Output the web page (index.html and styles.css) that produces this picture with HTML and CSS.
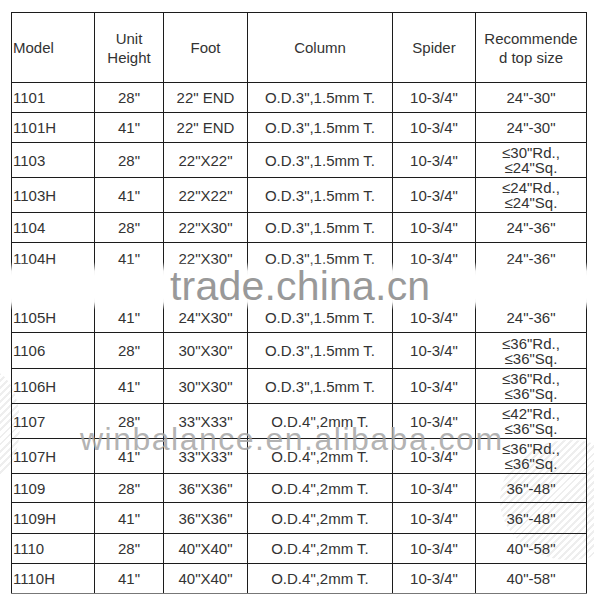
FILE: index.html
```html
<!DOCTYPE html>
<html>
<head>
<meta charset="utf-8">
<link rel="stylesheet" href="styles.css">
</head>
<body>
<div class="page">
  <div class="swoosh swoosh-left"></div>
  <div class="swoosh swoosh-right"></div>
  <table class="spec">
    <colgroup>
      <col class="c-model"><col class="c-height"><col class="c-foot"><col class="c-column"><col class="c-spider"><col class="c-top">
    </colgroup>
    <tr class="head">
      <td class="model">Model</td><td>Unit<br>Height</td><td>Foot</td><td>Column</td><td>Spider</td><td>Recommende<br>d top size</td>
    </tr>
    <tr class="r30"><td class="model">1101</td><td>28"</td><td>22" END</td><td>O.D.3",1.5mm T.</td><td>10-3/4"</td><td>24"-30"</td></tr>
    <tr class="r30"><td class="model">1101H</td><td>41"</td><td>22" END</td><td>O.D.3",1.5mm T.</td><td>10-3/4"</td><td>24"-30"</td></tr>
    <tr class="r35"><td class="model">1103</td><td>28"</td><td>22"X22"</td><td>O.D.3",1.5mm T.</td><td>10-3/4"</td><td class="two">≤30"Rd.,<br>≤24"Sq.</td></tr>
    <tr class="r35"><td class="model">1103H</td><td>41"</td><td>22"X22"</td><td>O.D.3",1.5mm T.</td><td>10-3/4"</td><td class="two">≤24"Rd.,<br>≤24"Sq.</td></tr>
    <tr class="r30"><td class="model">1104</td><td>28"</td><td>22"X30"</td><td>O.D.3",1.5mm T.</td><td>10-3/4"</td><td>24"-36"</td></tr>
    <tr class="split-top"><td class="model">1104H</td><td>41"</td><td>22"X30"</td><td>O.D.3",1.5mm T.</td><td>10-3/4"</td><td>24"-36"</td></tr>
    <tr class="split-bottom"><td class="model">1105H</td><td>41"</td><td>24"X30"</td><td>O.D.3",1.5mm T.</td><td>10-3/4"</td><td>24"-36"</td></tr>
    <tr class="r36"><td class="model">1106</td><td>28"</td><td>30"X30"</td><td>O.D.3",1.5mm T.</td><td>10-3/4"</td><td class="two">≤36"Rd.,<br>≤36"Sq.</td></tr>
    <tr class="r35"><td class="model">1106H</td><td>41"</td><td>30"X30"</td><td>O.D.3",1.5mm T.</td><td>10-3/4"</td><td class="two">≤36"Rd.,<br>≤36"Sq.</td></tr>
    <tr class="r35"><td class="model">1107</td><td>28"</td><td>33"X33"</td><td>O.D.4",2mm T.</td><td>10-3/4"</td><td class="two">≤42"Rd.,<br>≤36"Sq.</td></tr>
    <tr class="r35"><td class="model">1107H</td><td>41"</td><td>33"X33"</td><td>O.D.4",2mm T.</td><td>10-3/4"</td><td class="two">≤36"Rd.,<br>≤36"Sq.</td></tr>
    <tr class="r29"><td class="model">1109</td><td>28"</td><td>36"X36"</td><td>O.D.4",2mm T.</td><td>10-3/4"</td><td>36"-48"</td></tr>
    <tr class="r31"><td class="model">1109H</td><td>41"</td><td>36"X36"</td><td>O.D.4",2mm T.</td><td>10-3/4"</td><td>36"-48"</td></tr>
    <tr class="r30"><td class="model">1110</td><td>28"</td><td>40"X40"</td><td>O.D.4",2mm T.</td><td>10-3/4"</td><td>40"-58"</td></tr>
    <tr class="r30 last"><td class="model">1110H</td><td>41"</td><td>40"X40"</td><td>O.D.4",2mm T.</td><td>10-3/4"</td><td>40"-58"</td></tr>
  </table>
  <div class="band"><span class="mark-trade">trade.china.cn</span></div>
  <div class="mark-win">winbalance.en.alibaba.com</div>
</div>
</body>
</html>
```
FILE: styles.css
```css
html, body {
  margin: 0;
  padding: 0;
  background: #fff;
}
.page {
  position: relative;
  width: 594px;
  height: 600px;
  overflow: hidden;
  padding: 12px 0 0 11px;
  box-sizing: border-box;
  font-family: "Liberation Sans", Arial, sans-serif;
  color: #333;
}
.spec {
  position: relative;
  border-collapse: collapse;
  table-layout: fixed;
  width: 576px;
  font-size: 15px;
}
.c-model { width: 83px; }
.c-height { width: 69px; }
.c-foot { width: 84px; }
.c-column { width: 145px; }
.c-spider { width: 83px; }
.c-top { width: 111px; }
.spec td {
  border: 1px solid #1c1c1c;
  padding: 0;
  text-align: center;
  vertical-align: middle;
  line-height: 17px;
  white-space: nowrap;
}
.spec td.model {
  text-align: left;
  padding-left: 1px;
}
.head { height: 70px; }
.head td { line-height: 19px; }
.r29 { height: 29px; }
.r30 { height: 30px; }
.r31 { height: 31px; }
.r35 { height: 35px; }
.r36 { height: 36px; }
.spec td.two { line-height: 15px; }
.split-top { height: 45px; }
.split-top td {
  border-bottom: none;
  vertical-align: top;
  padding-top: 7px;
}
.split-bottom { height: 45px; }
.split-bottom td {
  border-top: none;
  vertical-align: bottom;
  padding-bottom: 6px;
}
.last td { border-bottom-color: #777; }
.band {
  position: absolute;
  left: 0;
  top: 262px;
  width: 594px;
  height: 48px;
  background: linear-gradient(to bottom, rgba(255,255,255,0) 0, rgba(255,255,255,0.95) 9px, #fff 14px, #fff 36px, rgba(255,255,255,0.95) 40px, rgba(255,255,255,0) 48px);
}
.mark-trade {
  position: absolute;
  left: 170px;
  top: 1px;
  font-family: "Liberation Sans", Arial, sans-serif;
  font-size: 41px;
  line-height: 46px;
  color: #999;
  letter-spacing: 0.2px;
}
.mark-win {
  position: absolute;
  left: 80px;
  top: 419px;
  font-family: "Liberation Sans", Arial, sans-serif;
  font-size: 32px;
  line-height: 40px;
  letter-spacing: 1.5px;
  color: rgba(165,165,165,0.85);
}
.swoosh {
  position: absolute;
  opacity: 0.35;
  background: repeating-linear-gradient(135deg, #cfcfcf 0 2px, rgba(255,255,255,0) 2px 5px);
  border-radius: 50%;
}
.swoosh-left {
  left: -40px;
  top: 370px;
  width: 60px;
  height: 110px;
}
.swoosh-right {
  left: 500px;
  top: 440px;
  width: 140px;
  height: 120px;
}
```
